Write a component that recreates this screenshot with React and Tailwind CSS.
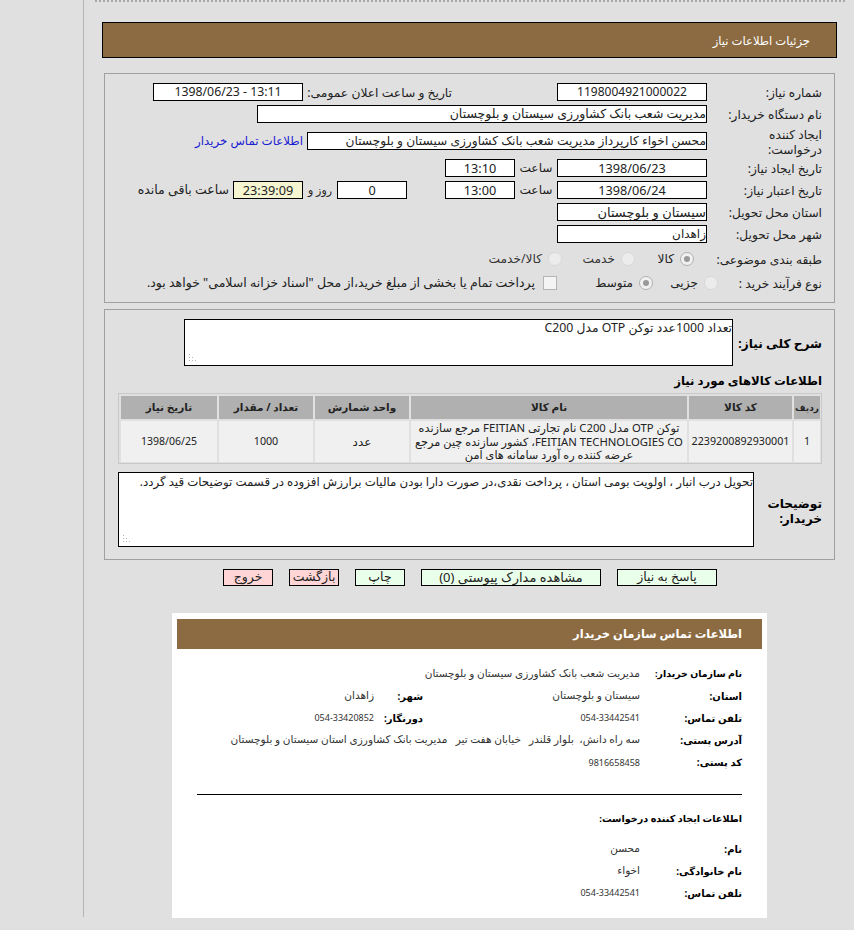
import React from "react";

const Box = ({ className = "", size = "text-[12.7px]", children, center = true }) => (
  <div
    className={`h-[18px] shrink-0 border border-black flex items-center leading-none whitespace-nowrap overflow-hidden ${size} ${
      center ? "justify-center" : "justify-start"
    } ${className}`}
  >
    {children}
  </div>
);

const Radio = ({ checked }) => (
  <span
    className={`relative block w-[14px] h-[14px] shrink-0 rounded-full border ${
      checked ? "border-[#b0b0b0] bg-[#f0f0f0]" : "border-[#d8d8d8] bg-[#ececec]"
    }`}
  >
    {checked && (
      <span className="absolute left-[3px] top-[3px] w-[6px] h-[6px] rounded-full bg-[#999999]" />
    )}
  </span>
);

const Grip = () => (
  <svg
    className="absolute left-[3px] bottom-[3px]"
    width="9"
    height="9"
    viewBox="0 0 9 9"
    fill="#b4b4b4"
  >
    <rect x="1" y="1" width="1" height="1" />
    <rect x="1" y="4" width="1" height="1" />
    <rect x="1" y="7" width="1" height="1" />
    <rect x="4" y="4" width="1" height="1" />
    <rect x="4" y="7" width="1" height="1" />
    <rect x="7" y="7" width="1" height="1" />
  </svg>
);

const Row = ({ className = "", label, labelClass = "w-[115px]", children }) => (
  <div className={`flex items-center h-[18px] ${className}`}>
    <div className={`shrink-0 pt-[1px] text-[12.2px] leading-[15px] ${labelClass}`}>{label}</div>
    {children}
  </div>
);

const columns = [
  { title: "ردیف", w: "w-[26px]", head: "text-[9px]", value: "1", size: "text-[10.7px]" },
  { title: "کد کالا", w: "w-[103px]", head: "text-[10.5px]", value: "2239200892930001", size: "text-[10.7px]" },
  { title: "نام کالا", w: "w-[276px]", head: "text-[10.5px]", value: null, size: "text-[11.3px]" },
  { title: "واحد شمارش", w: "w-[94px]", head: "text-[10.5px]", value: "عدد", size: "text-[12px]" },
  { title: "تعداد / مقدار", w: "w-[94px]", head: "text-[10.5px]", value: "1000", size: "text-[10.7px]" },
  { title: "تاریخ نیاز", w: "w-[96px]", head: "text-[10.5px]", value: "1398/06/25", size: "text-[10.5px]" },
];

const buttons = [
  { text: "پاسخ به نیاز", w: "w-[100px]", color: "bg-[#eaffea]", gap: "ml-[16px]", size: "text-[12.5px]" },
  { text: "مشاهده مدارک پیوستی (0)", w: "w-[180px]", color: "bg-[#eaffea]", gap: "ml-[16px]", size: "text-[13px]" },
  { text: "چاپ", w: "w-[50px]", color: "bg-[#eaffea]", gap: "ml-[16px]", size: "text-[12.5px]" },
  { text: "بازگشت", w: "w-[50px]", color: "bg-[#ffd5d5]", gap: "ml-[16px]", size: "text-[12.5px]" },
  { text: "خروج", w: "w-[50px]", color: "bg-[#ffd5d5]", gap: "", size: "text-[12.5px]" },
];

const ContactRow = ({
  label,
  value,
  extraLabel,
  extraValue,
  numeric,
  labelSize = "text-[10px]",
  className = "h-[22px]",
}) => (
  <div className={`flex items-center ${className}`}>
    <div className={`w-[102px] shrink-0 font-bold text-black whitespace-nowrap ${labelSize}`}>{label}</div>
    <div
      className={`${extraLabel ? "w-[217px]" : ""} ${
        numeric ? "text-[9px]" : "text-[10.5px]"
      } shrink-0 text-[#333] whitespace-pre`}
    >
      {value}
    </div>
    {extraLabel && (
      <>
        <div className="w-[49px] shrink-0 font-bold text-[10px] text-black whitespace-nowrap">{extraLabel}</div>
        <div className={`${numeric ? "text-[9px]" : "text-[10.5px]"} text-[#333] whitespace-nowrap`}>{extraValue}</div>
      </>
    )}
  </div>
);

export default function App() {
  return (
    <div
      dir="rtl"
      className="w-[854px] h-[930px] overflow-hidden bg-[#e0e0e0] text-[#222] font-['Noto_Sans','DejaVu_Sans',sans-serif] flex flex-row-reverse"
    >
      <div className="w-[84px] h-[917px] shrink-0 border-r border-[#b4b4b4]" />

      <div className="flex-1 min-w-0">
        <div className="h-[2px] mr-[9px] ml-[11px] border-t-2 border-dotted border-[#a8a8a8]" />

        <div className="mt-[20px] mr-[17px] ml-[18px] h-[36px] border border-black bg-[#8c6b42] flex items-center pt-[2px] pr-[26px] text-white text-[11.6px]">
          جزئیات اطلاعات نیاز
        </div>

        <div className="mt-[15px] mr-[19px] ml-[20px] h-[230px] border border-[#a0a0a0] pt-[9px] pr-[12px]">
          <Row label="شماره نیاز:">
            <Box className="w-[150px] bg-white" size="text-[12px]">1198004921000022</Box>
            <div className="w-[254px] shrink-0 pt-[2px] pr-[105px] text-[12.3px] whitespace-nowrap">
              تاریخ و ساعت اعلان عمومی:
            </div>
            <Box className="w-[150px] bg-white" size="text-[12.3px]">13:11 - 1398/06/23</Box>
          </Row>
          <Row className="mt-[4px]" label="نام دستگاه خریدار:">
            <Box className="w-[450px] bg-white" size="text-[12.5px]" center={false}>
              مدیریت شعب بانک کشاورزی سیستان و بلوچستان
            </Box>
          </Row>
          <Row className="mt-[9px]" label={<>ایجاد کننده<br />درخواست:</>}>
            <Box className="w-[400px] bg-white" size="text-[12.2px]" center={false}>
              محسن اخواء کارپرداز مدیریت شعب بانک کشاورزی سیستان و بلوچستان
            </Box>
            <a className="mr-[4px] text-[11.8px] text-[#1a1ad0] whitespace-nowrap">اطلاعات تماس خریدار</a>
          </Row>
          <Row className="mt-[9px]" label="تاریخ ایجاد نیاز:">
            <Box className="w-[150px] bg-white">1398/06/23</Box>
            <div className="w-[42px] text-center text-[12.2px]">ساعت</div>
            <Box className="w-[70px] bg-white">13:10</Box>
          </Row>
          <Row className="mt-[4px]" label="تاریخ اعتبار نیاز:">
            <Box className="w-[150px] bg-white">1398/06/24</Box>
            <div className="w-[42px] text-center text-[12.2px]">ساعت</div>
            <Box className="w-[70px] bg-white">13:00</Box>
            <div className="w-[38px]" />
            <Box className="w-[70px] bg-white">0</Box>
            <div className="w-[34px] text-center text-[11px] whitespace-nowrap">روز و</div>
            <Box className="w-[70px] bg-[#f5f5d2]">23:39:09</Box>
            <div className="mr-[4px] text-[12.5px] whitespace-nowrap">ساعت باقی مانده</div>
          </Row>
          <Row className="mt-[4px]" label="استان محل تحویل:">
            <Box className="w-[150px] bg-white" size="text-[13px]" center={false}>سیستان و بلوچستان</Box>
          </Row>
          <Row className="mt-[4px]" label="شهر محل تحویل:">
            <Box className="w-[150px] bg-white" size="text-[12px]" center={false}>زاهدان</Box>
          </Row>
          <Row className="mt-[7px]" label="طبقه بندی موضوعی:">
            <div className="w-[72px] flex items-center gap-[6px] pr-[13px] text-[12.2px] shrink-0">
              <Radio checked />
              <span>کالا</span>
            </div>
            <div className="w-[73px] flex items-center gap-[6px] text-[12.2px] text-[#333] shrink-0">
              <Radio />
              <span>خدمت</span>
            </div>
            <div className="flex items-center gap-[6px] text-[12.2px] text-[#333]">
              <Radio />
              <span>کالا/خدمت</span>
            </div>
          </Row>
          <Row className="mt-[6px]" labelClass="w-[104px]" label="نوع فرآیند خرید :">
            <div className="w-[65px] flex items-center gap-[6px] text-[12.2px] shrink-0">
              <Radio />
              <span>جزیی</span>
            </div>
            <div className="w-[96px] flex items-center gap-[6px] text-[12px] shrink-0">
              <Radio checked />
              <span>متوسط</span>
            </div>
            <div className="flex items-center gap-[8px] text-[12.5px] whitespace-nowrap">
              <span className="block w-[14px] h-[14px] shrink-0 border border-[#b4b4b4] bg-[#f4f4f4]" />
              <span>پرداخت تمام یا بخشی از مبلغ خرید،از محل "اسناد خزانه اسلامی" خواهد بود.</span>
            </div>
          </Row>
        </div>

        <div className="mt-[6px] mr-[19px] ml-[20px] h-[251px] border border-[#a0a0a0] pt-[9px] pr-[12px]">
          <div className="flex">
            <div className="w-[89px] shrink-0 pt-[16px] font-bold text-[12.2px] text-black whitespace-nowrap">
              شرح کلی نیاز:
            </div>
            <div className="relative w-[549px] h-[47px] border border-black bg-white text-[12.3px] leading-[16px]">
              تعداد 1000عدد توکن OTP مدل C200
              <Grip />
            </div>
          </div>

          <div className="mt-[5px] h-[20px] flex items-center font-bold text-[11.7px] text-black">
            اطلاعات کالاهای مورد نیاز
          </div>

          <div className="mt-[2px] w-[704px] h-[71px] border border-[#c8c8c8] pt-[2px] pb-[1px] pr-[1px] pl-[2px] flex gap-[2px]">
            {columns.map((col) => (
              <div key={col.title} className={`${col.w} shrink-0 flex flex-col gap-[2px]`}>
                <div className={`h-[23px] bg-[#b0b0b0] flex items-center justify-center font-bold text-[#222] whitespace-nowrap ${col.head}`}>
                  {col.title}
                </div>
                <div className={`flex-1 bg-[#f0f0f0] flex flex-col items-center justify-center leading-[13.5px] whitespace-nowrap ${col.size}`}>
                  {col.value ?? (
                    <>
                      <div>توکن OTP مدل C200 نام تجارتی FEITIAN مرجع سازنده</div>
                      <div>FEITIAN TECHNOLOGIES CO، کشور سازنده چین مرجع</div>
                      <div>عرضه کننده ره آورد سامانه های امن</div>
                    </>
                  )}
                </div>
              </div>
            ))}
          </div>

          <div className="mt-[8px] flex">
            <div className="w-[68px] shrink-0 pt-[24px] font-bold text-[12.2px] leading-[15px] text-black">
              توضیحات
              <br />
              خریدار:
            </div>
            <div className="relative w-[636px] h-[75px] border border-black bg-white text-[11.8px] leading-[16px] whitespace-nowrap">
              تحویل درب انبار ، اولویت بومی استان ، پرداخت نقدی،در صورت دارا بودن مالیات برارزش افزوده در قسمت توضیحات قید گردد.
              <Grip />
            </div>
          </div>
        </div>

        <div className="mt-[9px] mr-[137px] h-[17px] flex">
          {buttons.map((btn) => (
            <div
              key={btn.text}
              className={`${btn.w} ${btn.color} ${btn.gap} ${btn.size} shrink-0 border border-black flex items-center justify-center leading-none whitespace-nowrap`}
            >
              {btn.text}
            </div>
          ))}
        </div>

        <div className="mt-[27px] mr-[87px] w-[595px] h-[305px] bg-white pt-[6px] px-[5px]">
          <div className="h-[30px] bg-[#8c6b42] flex items-center pr-[20px] font-bold text-[11.5px] text-white">
            اطلاعات تماس سازمان خریدار
          </div>
          <div className="mt-[14px] pr-[20px]">
            <ContactRow labelSize="text-[9.4px]" label="نام سازمان خریدار:" value="مدیریت شعب بانک کشاورزی سیستان و بلوچستان" />
            <ContactRow label="استان:" value="سیستان و بلوچستان" extraLabel="شهر:" extraValue="زاهدان" />
            <ContactRow numeric label="تلفن تماس:" value="054-33442541" extraLabel="دورنگار:" extraValue="054-33420852" />
            <ContactRow label="آدرس پستی:" value="سه راه دانش،  بلوار قلندر   خیابان هفت تیر   مدیریت بانک کشاورزی استان سیستان و بلوچستان" />
            <ContactRow numeric className="h-[23px]" label="کد پستی:" value="9816658458" />
            <div className="mt-[20px] ml-[20px] border-t border-black" />
            <div className="mt-[15px] h-[18px] flex items-center font-bold text-[9.6px] text-black">
              اطلاعات ایجاد کننده درخواست:
            </div>
            <div className="mt-[10px]">
              <ContactRow label="نام:" value="محسن" />
              <ContactRow label="نام خانوادگی:" value="اخواء" />
              <ContactRow numeric label="تلفن تماس:" value="054-33442541" />
            </div>
          </div>
        </div>
      </div>
    </div>
  );
}
